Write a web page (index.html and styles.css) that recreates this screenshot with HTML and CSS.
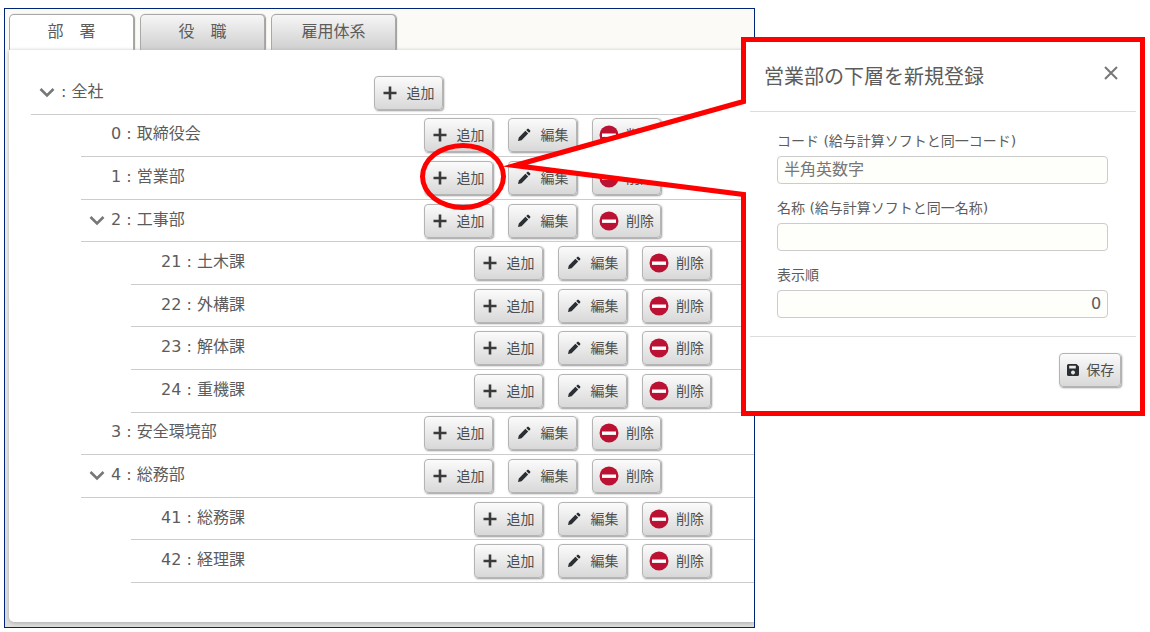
FILE: index.html
```html
<!DOCTYPE html>
<html lang="ja">
<head>
<meta charset="utf-8">
<title>部署</title>
<link rel="stylesheet" href="styles.css">
</head>
<body>
<svg class="defs" aria-hidden="true">
  <symbol id="chevron" viewBox="0 0 16 16"><path d="M1.500 5l6.500 6.500L14.500 5" fill="none" stroke="#777" stroke-width="2.6"/></symbol>
  <symbol id="plus" viewBox="0 0 14 14"><path d="M7 .5v13M.5 7h13" fill="none" stroke="#3a3a3a" stroke-width="2.6"/></symbol>
  <symbol id="pencil" viewBox="0 0 14 14"><path d="M1 13l.8-3.6 6.6-6.6 2.8 2.8-6.6 6.6zM9.200 2l1.100-1.100q.7-.6 1.400 0l1.400 1.400q.6.7 0 1.400L12 4.800z" fill="#2b2f33"/></symbol>
  <symbol id="minus" viewBox="0 0 20 20"><circle cx="10" cy="10" r="9.5" fill="#bb1133"/><path d="M3 8.500h14v3.400H3z" fill="#fff"/></symbol>
  <symbol id="disk" viewBox="0 0 14 14"><path fill-rule="evenodd" d="M2.500 1H10.500L13 3.500V11.500Q13 13 11.500 13H2.500Q1 13 1 11.500V2.500Q1 1 2.500 1zM3.200 2.800V5.600H9.800V2.800zM7 7.500a2 2 0 1 0 .01 0z" fill="#2b2f33"/></symbol>
</svg>
<main class="stage">
  <section class="panel">
    <nav class="tabs">
      <button class="tab tab-active" type="button">部　署</button>
      <button class="tab" type="button">役　職</button>
      <button class="tab" type="button">雇用体系</button>
    </nav>
    <div class="sheet">
      <ul class="tree">
        <li class="row"><span class="name"><svg class="chevron"><use href="#chevron"/></svg>: 全社</span><button class="btn" type="button"><svg class="icon"><use href="#plus"/></svg>追加</button></li>
        <li class="row level1"><span class="name">0 : 取締役会</span><button class="btn" type="button"><svg class="icon"><use href="#plus"/></svg>追加</button><button class="btn" type="button"><svg class="icon"><use href="#pencil"/></svg>編集</button><button class="btn btn-delete" type="button"><svg class="icon-delete"><use href="#minus"/></svg>削除</button></li>
        <li class="row level1"><span class="name">1 : 営業部</span><button class="btn marked" type="button"><svg class="icon"><use href="#plus"/></svg>追加</button><button class="btn" type="button"><svg class="icon"><use href="#pencil"/></svg>編集</button><button class="btn btn-delete" type="button"><svg class="icon-delete"><use href="#minus"/></svg>削除</button></li>
        <li class="row level1"><span class="name"><svg class="chevron"><use href="#chevron"/></svg>2 : 工事部</span><button class="btn" type="button"><svg class="icon"><use href="#plus"/></svg>追加</button><button class="btn" type="button"><svg class="icon"><use href="#pencil"/></svg>編集</button><button class="btn btn-delete" type="button"><svg class="icon-delete"><use href="#minus"/></svg>削除</button></li>
        <li class="row level2"><span class="name">21 : 土木課</span><button class="btn" type="button"><svg class="icon"><use href="#plus"/></svg>追加</button><button class="btn" type="button"><svg class="icon"><use href="#pencil"/></svg>編集</button><button class="btn btn-delete" type="button"><svg class="icon-delete"><use href="#minus"/></svg>削除</button></li>
        <li class="row level2"><span class="name">22 : 外構課</span><button class="btn" type="button"><svg class="icon"><use href="#plus"/></svg>追加</button><button class="btn" type="button"><svg class="icon"><use href="#pencil"/></svg>編集</button><button class="btn btn-delete" type="button"><svg class="icon-delete"><use href="#minus"/></svg>削除</button></li>
        <li class="row level2"><span class="name">23 : 解体課</span><button class="btn" type="button"><svg class="icon"><use href="#plus"/></svg>追加</button><button class="btn" type="button"><svg class="icon"><use href="#pencil"/></svg>編集</button><button class="btn btn-delete" type="button"><svg class="icon-delete"><use href="#minus"/></svg>削除</button></li>
        <li class="row level2"><span class="name">24 : 重機課</span><button class="btn" type="button"><svg class="icon"><use href="#plus"/></svg>追加</button><button class="btn" type="button"><svg class="icon"><use href="#pencil"/></svg>編集</button><button class="btn btn-delete" type="button"><svg class="icon-delete"><use href="#minus"/></svg>削除</button></li>
        <li class="row level1"><span class="name">3 : 安全環境部</span><button class="btn" type="button"><svg class="icon"><use href="#plus"/></svg>追加</button><button class="btn" type="button"><svg class="icon"><use href="#pencil"/></svg>編集</button><button class="btn btn-delete" type="button"><svg class="icon-delete"><use href="#minus"/></svg>削除</button></li>
        <li class="row level1"><span class="name"><svg class="chevron"><use href="#chevron"/></svg>4 : 総務部</span><button class="btn" type="button"><svg class="icon"><use href="#plus"/></svg>追加</button><button class="btn" type="button"><svg class="icon"><use href="#pencil"/></svg>編集</button><button class="btn btn-delete" type="button"><svg class="icon-delete"><use href="#minus"/></svg>削除</button></li>
        <li class="row level2"><span class="name">41 : 総務課</span><button class="btn" type="button"><svg class="icon"><use href="#plus"/></svg>追加</button><button class="btn" type="button"><svg class="icon"><use href="#pencil"/></svg>編集</button><button class="btn btn-delete" type="button"><svg class="icon-delete"><use href="#minus"/></svg>削除</button></li>
        <li class="row level2"><span class="name">42 : 経理課</span><button class="btn" type="button"><svg class="icon"><use href="#plus"/></svg>追加</button><button class="btn" type="button"><svg class="icon"><use href="#pencil"/></svg>編集</button><button class="btn btn-delete" type="button"><svg class="icon-delete"><use href="#minus"/></svg>削除</button></li>
      </ul>
    </div>
  </section>

  <form class="dialog" role="dialog" aria-labelledby="dialog-title">
    <svg class="tail" viewBox="0 0 246 105" aria-hidden="true">
      <path d="M246 4L240 5 14 68.500 240 97 246 98z" fill="#fff"/>
      <path d="M242.500 0V4.500L14 68.500 242.500 97.500V105" fill="none" stroke="#f00" stroke-width="5" stroke-miterlimit="10"/>
    </svg>
    <header class="dialog-head">
      <h1 class="dialog-title" id="dialog-title">営業部の下層を新規登録</h1>
      <button class="close" type="button" aria-label="閉じる"><svg viewBox="0 0 14 14"><path d="M1 1l12 12M13 1L1 13" fill="none" stroke="#777" stroke-width="2"/></svg></button>
    </header>
    <div class="dialog-body">
      <div class="field"><label for="code">コード (給与計算ソフトと同一コード)</label><input id="code" type="text" placeholder="半角英数字"></div>
      <div class="field"><label for="name">名称 (給与計算ソフトと同一名称)</label><input id="name" type="text"></div>
      <div class="field"><label for="order">表示順</label><input class="number" id="order" type="text" value="0"></div>
    </div>
    <footer class="dialog-foot">
      <button class="btn btn-save" type="button"><svg class="icon"><use href="#disk"/></svg>保存</button>
    </footer>
  </form>
</main>
</body>
</html>
```

FILE: styles.css
```css
*, *::after { box-sizing: border-box; }

body {
  margin: 0;
  background: #fff;
  color: #5c5c5c;
  font-family: "DejaVu Sans", "Noto Sans CJK JP", sans-serif;
  font-size: 16px;
  line-height: 20px;
}

button, input { font: inherit; color: inherit; }

.defs { display: none; }

.stage {
  position: relative;
  padding: 8px 0 4px 4px;
}

.panel {
  width: 65.5%;
  padding: 5px 0 5px 4px;
  border: 1px solid #00247a;
  background: linear-gradient(#fcfaf6 0, #fcfaf6 40px, #dededc 100%);
  overflow: hidden;
}

.tabs {
  display: flex;
  gap: 6px;
}

.tab {
  width: 125px;
  height: 36px;
  padding: 0 0 2px;
  border: 1px solid #a8a8a8;
  border-bottom: 0;
  border-radius: 5px 5px 0 0;
  background: linear-gradient(#f6f6f6, #cfcfcf);
  box-shadow: 1px 0 1px #999;
}

.tab-active { background: #fff; }

.sheet {
  position: relative;
  padding: 22px 0 39px 22px;
  border-bottom-left-radius: 5px;
  background: #fff;
  box-shadow: 0 1px 4px #aaa;
}

.tree {
  display: flex;
  flex-direction: column;
  min-height: 511px;
  margin: 0;
  padding: 0;
  list-style: none;
}

.row {
  display: flex;
  flex: 1;
  align-items: center;
  gap: 15px;
  border-bottom: 1px solid #ccc;
}

.level1 { margin-left: 50px; }
.level2 { margin-left: 100px; }

.name {
  display: flex;
  align-items: center;
  gap: 6px;
  flex: none;
  width: 328px;
  padding: 0 0 2px 30px;
}

.chevron {
  width: 16px;
  height: 16px;
  margin-left: -22px;
}

.btn {
  position: relative;
  display: flex;
  flex: none;
  align-items: center;
  justify-content: center;
  gap: 10px;
  width: 69px;
  height: 34px;
  padding: 0;
  border: 1px solid #b4b4b4;
  border-radius: 4px;
  background: linear-gradient(#fbfbfb, #d8d8d8);
  box-shadow: 1px 1px 2px #999;
  color: #505050;
  font-size: 14px;
}

.btn-delete { gap: 7px; }

.icon {
  width: 14px;
  height: 14px;
}

.icon-delete {
  width: 20px;
  height: 20px;
}

.marked { z-index: 1; }

.marked::after {
  content: "";
  position: absolute;
  top: -19px;
  left: -5px;
  width: 86px;
  height: 67px;
  border: 5px solid #f00;
  border-radius: 50%;
}

.dialog {
  position: absolute;
  z-index: 2;
  top: 37px;
  left: 64.43%;
  width: 35.15%;
  padding: 0 4px;
  border: 5px solid #f00;
  background: #fff;
}

.tail {
  position: absolute;
  top: 55px;
  left: -245px;
  width: 246px;
  height: 105px;
}

.dialog-head {
  display: flex;
  align-items: center;
  justify-content: space-between;
  height: 70px;
  padding: 0 18px 0 14px;
  border-bottom: 1px solid #ddd;
}

.dialog-title {
  margin: 0;
  font-size: 20px;
  font-weight: 400;
}

.close {
  display: flex;
  padding: 0;
  margin-bottom: 8px;
  border: 0;
  background: none;
}

.close svg {
  width: 14px;
  height: 14px;
}

.dialog-body {
  display: grid;
  gap: 14px;
  padding: 19px 28px 18px 27px;
  border-bottom: 1px solid #ddd;
}

.field {
  display: grid;
  gap: 5px;
  font-size: 14px;
}

.field input {
  width: 100%;
  height: 28px;
  padding: 0 6px 2px;
  border: 1px solid #ccc;
  border-radius: 4px;
  background: #fefefa;
  font-size: 16px;
}

.field input::placeholder {
  color: #777;
  opacity: 1;
}

.field .number { text-align: right; }

.dialog-foot {
  display: flex;
  justify-content: flex-end;
  padding: 16px 15px 24px;
}

.btn-save {
  gap: 6px;
  width: 62px;
}
```
